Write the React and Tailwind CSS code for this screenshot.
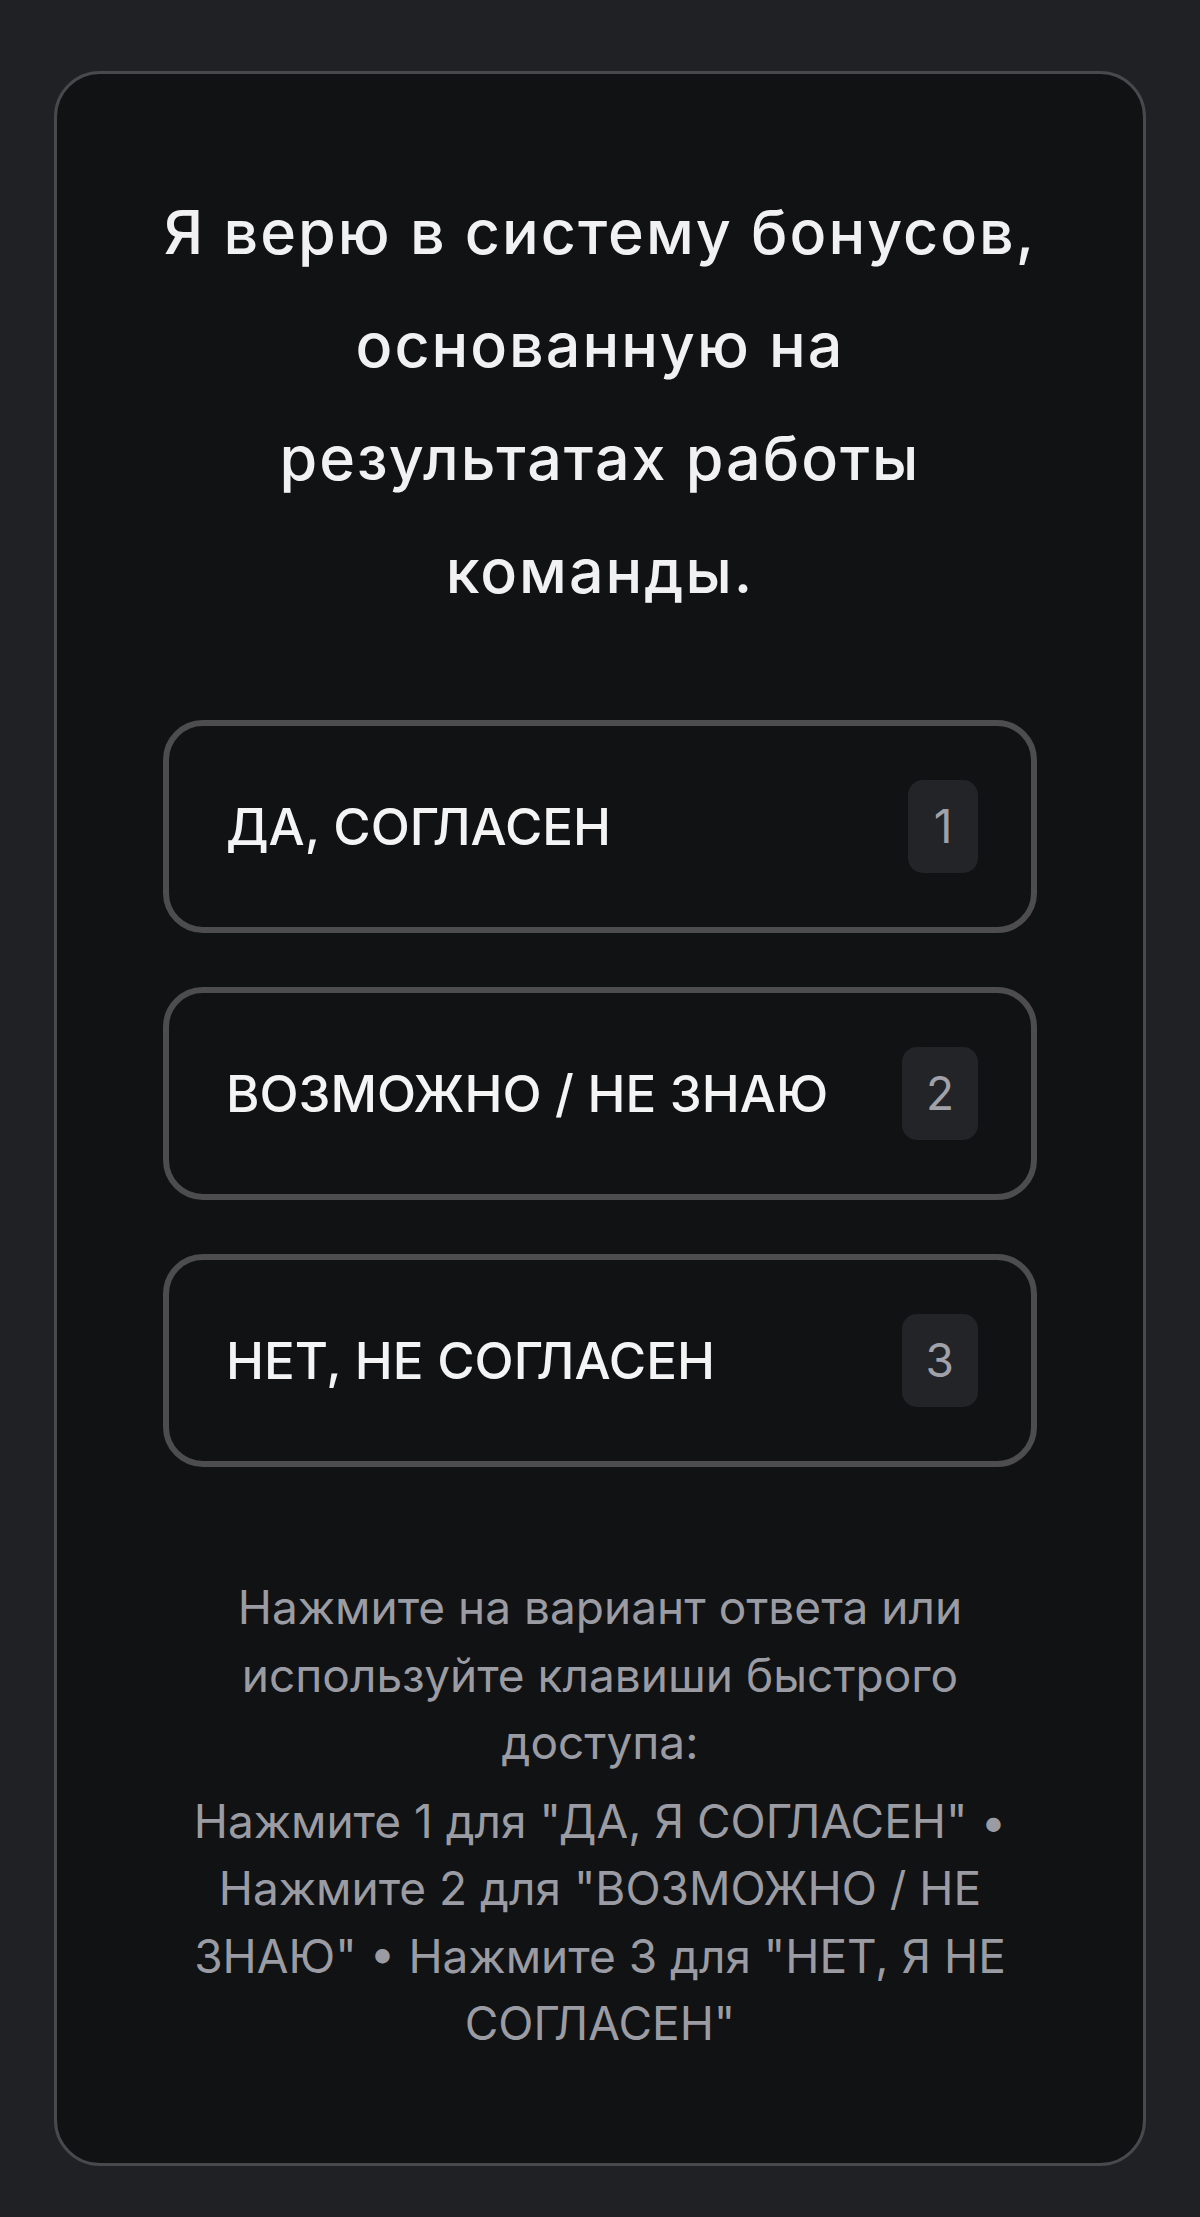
import { useState } from 'react'

const OPTIONS = [
    { key: '1', label: 'ДА, СОГЛАСЕН' },
    { key: '2', label: 'ВОЗМОЖНО / НЕ ЗНАЮ' },
    { key: '3', label: 'НЕТ, НЕ СОГЛАСЕН' },
]

const TITLE = ['Я верю в систему бонусов,', 'основанную на', 'результатах работы', 'команды.']

function OptionButton({ label, hotkey, selected, onClick }) {
    return (
        <button
            type="button"
            onClick={onClick}
            className={`flex items-center justify-between w-full h-[213px] pl-[57px] pr-[53px] rounded-[40px] border-[6px] text-left ${selected ? 'border-[#8a8a8f]' : 'border-[#4d4d50]'} bg-[#111213]`}
        >
            <span className="text-[51px] leading-[60px] font-medium text-[#f4f4f5] whitespace-nowrap">{label}</span>
            <span className="flex items-center justify-center h-[93px] min-w-[70px] px-[24px] rounded-[15px] bg-[#232427] text-[46px] text-[#a1a1aa]">
                {hotkey}
            </span>
        </button>
    )
}

export default function App() {
    const [answer, setAnswer] = useState(null)

    return (
        <div className="min-h-screen bg-[#202124] px-[54px] pt-[71px] pb-[55px] font-['Inter','Noto_Sans',sans-serif]">
            <div className="flex flex-col items-center h-[2095px] rounded-[46px] border-[3px] border-[#48494c] bg-[#111213] px-[106px] pt-[102px]">
                {/* вопрос */}
                <h1 className="flex flex-col items-center text-center text-[61px] leading-[113px] tracking-[2px] font-medium text-[#f1f1f3]">
                    {TITLE.map((line) => (
                        <span key={line} className="whitespace-nowrap">{line}</span>
                    ))}
                </h1>

                {/* варианты */}
                <div className="flex flex-col gap-[54px] w-full mt-[92px]">
                    {OPTIONS.map((o) => (
                        <OptionButton
                            key={o.key}
                            label={o.label}
                            hotkey={o.key}
                            selected={answer === o.key}
                            onClick={() => setAnswer(o.key)}
                        />
                    ))}
                </div>

                {/* подсказка */}
                <div className="mt-[107px] text-center text-[46px] leading-[67.5px] text-[#9b9ca3]">
                    <p>
                        Нажмите на вариант ответа или
                        <br />
                        используйте клавиши быстрого
                        <br />
                        доступа:
                    </p>
                    <p className="mt-[11px]">
                        Нажмите 1 для "ДА, Я СОГЛАСЕН" •
                        <br />
                        Нажмите 2 для "ВОЗМОЖНО / НЕ
                        <br />
                        ЗНАЮ" • Нажмите 3 для "НЕТ, Я НЕ
                        <br />
                        СОГЛАСЕН"
                    </p>
                </div>
            </div>
        </div>
    )
}
